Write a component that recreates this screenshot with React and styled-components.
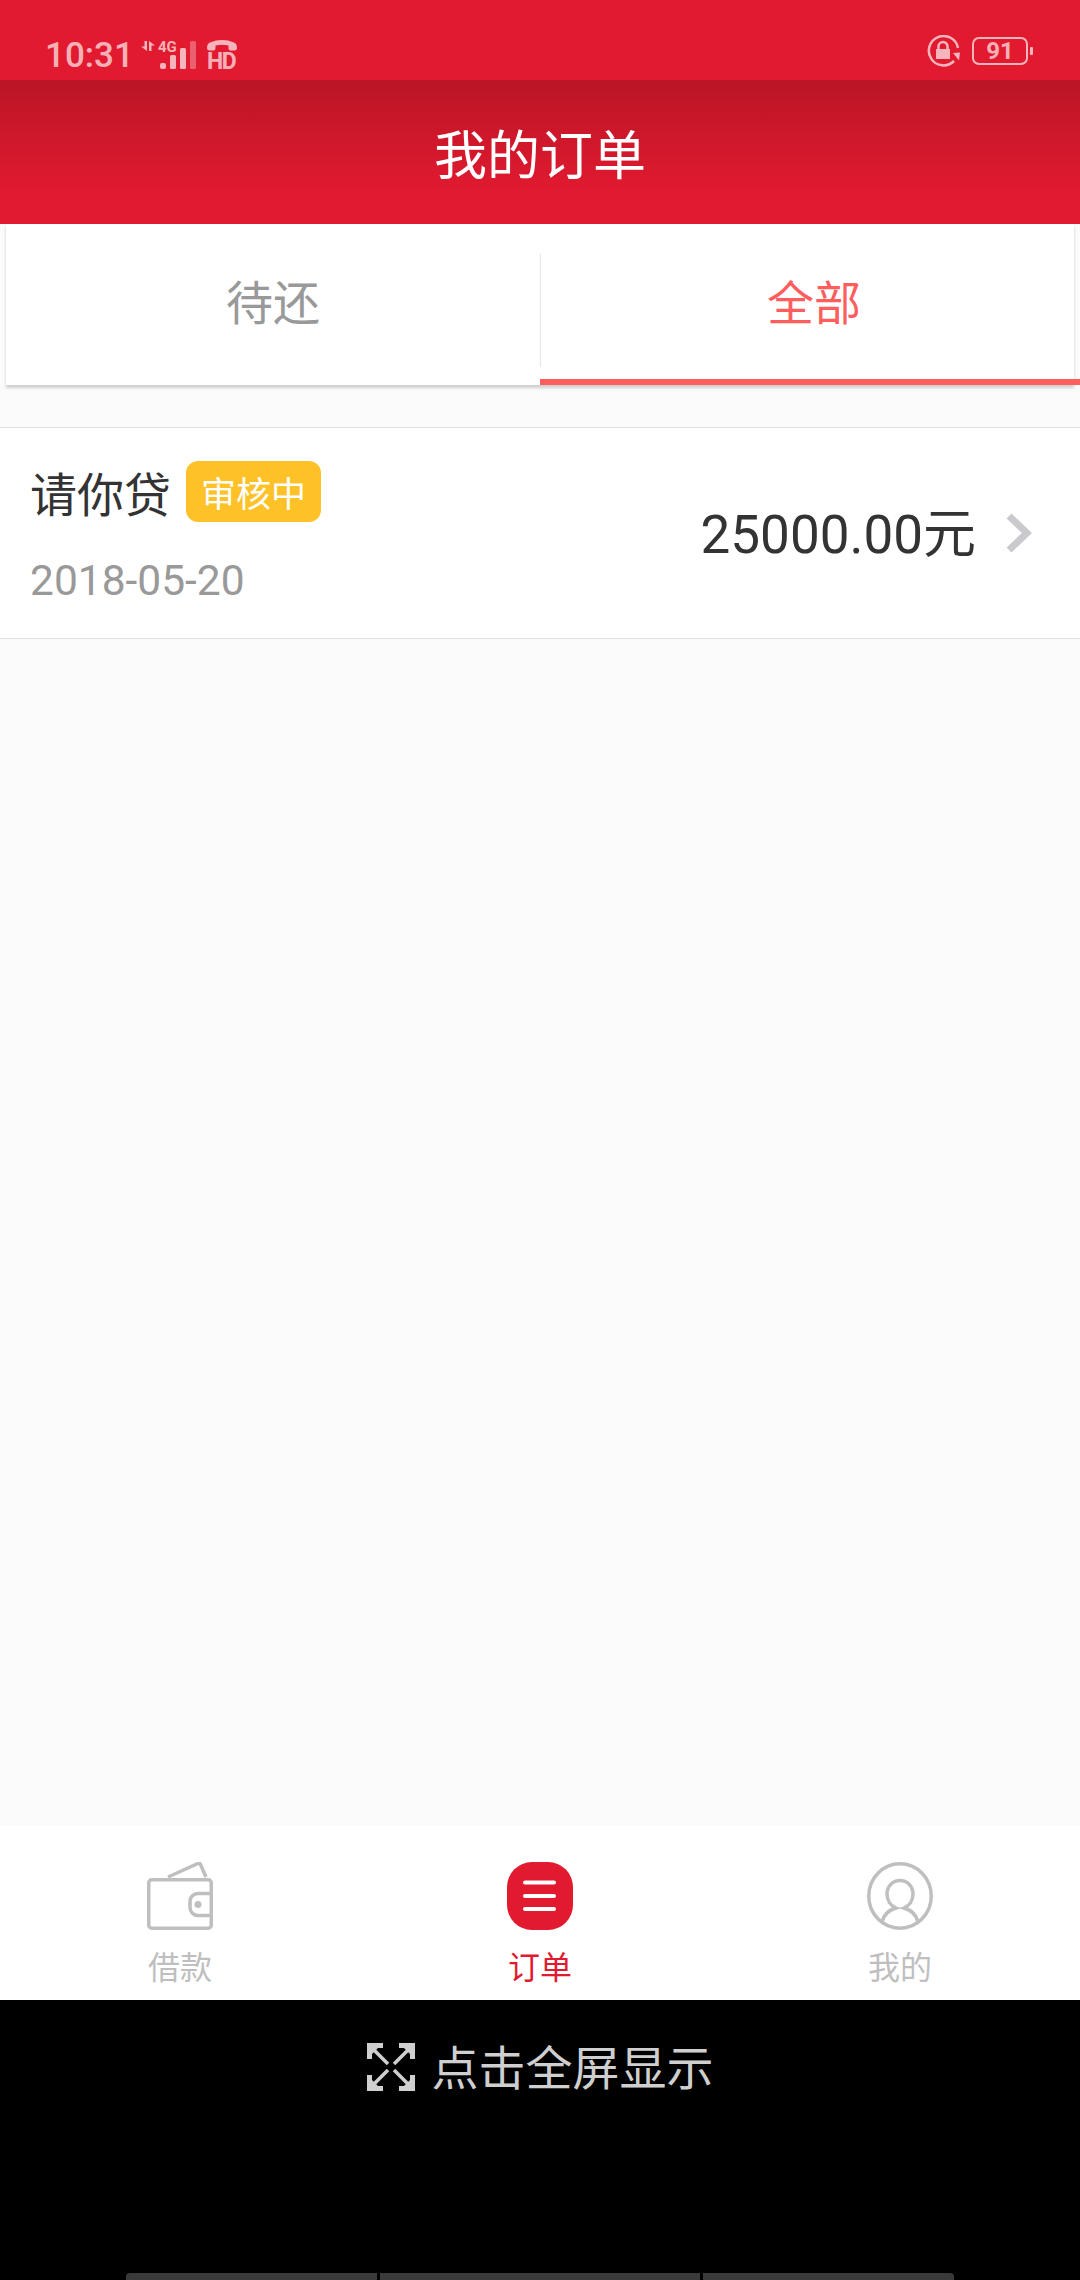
import React from "react";
import styled, { createGlobalStyle } from "styled-components";

const GlobalStyle = createGlobalStyle`
  html, body {
    margin: 0;
    padding: 0;
    background: #000;
  }
  * {
    box-sizing: border-box;
  }
`;

const CJK = `Roboto, "Noto Sans CJK SC", sans-serif`;
const RED = "#e21a30";

const Page = styled.div`
  width: 1080px;
  height: 2280px;
  display: flex;
  flex-direction: column;
  overflow: hidden;
  background: #fbfbfb;
  font-family: ${CJK};
`;

const StatusBar = styled.div`
  height: 80px;
  flex: none;
  display: flex;
  align-items: flex-start;
  justify-content: space-between;
  padding: 36px 52px 0 45px;
  background: ${RED};
  color: rgba(255, 255, 255, 0.68);
`;

const StatusGroup = styled.div`
  display: flex;
  align-items: center;
  margin-top: ${(p) => p.$lift || "0"};
`;

const Clock = styled.span`
  width: 95px;
  font-size: 35px;
  font-weight: 500;
  line-height: 40px;
`;

const SignalWrap = styled.div`
  position: relative;
  width: 57px;
  height: 32px;
`;

const NetLabel = styled.span`
  position: absolute;
  left: 18px;
  top: 0;
  font-size: 15px;
  line-height: 14px;
  font-weight: 700;
`;

const HdWrap = styled.div`
  position: relative;
  width: 30px;
  height: 32px;
  margin-left: 10px;
`;

const HdLabel = styled.span`
  position: absolute;
  left: 0;
  bottom: 0;
  font-size: 23px;
  line-height: 20px;
  font-weight: 700;
  letter-spacing: -1.5px;
`;

const Battery = styled.div`
  width: 56px;
  height: 28px;
  margin-left: 12px;
  position: relative;
  border: 2px solid rgba(255, 255, 255, 0.68);
  border-radius: 7px;
  display: flex;
  align-items: center;
  justify-content: center;
  font-size: 24px;
  font-weight: 700;

  &::after {
    content: "";
    position: absolute;
    right: -7px;
    top: 8px;
    width: 3px;
    height: 8px;
    border-radius: 1px;
    background: rgba(255, 255, 255, 0.68);
  }
`;

const Header = styled.header`
  height: 144px;
  flex: none;
  display: flex;
  align-items: center;
  justify-content: center;
  color: #fff;
  font-size: 53px;
  background: linear-gradient(#bb1525 0, ${RED} 115px);
`;

const Tabs = styled.div`
  height: 161px;
  flex: none;
  margin: 0 6px;
  display: grid;
  grid-template-columns: 1fr 1fr;
  background: #fff;
  box-shadow: 0 3px 3px rgba(0, 0, 0, 0.18);
`;

const Tab = styled.div`
  position: relative;
  display: flex;
  align-items: center;
  justify-content: center;
  padding-bottom: 11px;
  padding-left: ${(p) => (p.$active ? "14px" : "0")};
  font-size: 47px;
  color: ${(p) => (p.$active ? "#ff5e5e" : "#999")};

  &::before {
    content: "";
    display: ${(p) => (p.$active ? "block" : "none")};
    position: absolute;
    left: 0;
    top: 30px;
    width: 1px;
    height: 113px;
    background: #e6e6e6;
  }

  &::after {
    content: "";
    display: ${(p) => (p.$active ? "block" : "none")};
    position: absolute;
    left: 0;
    right: -6px;
    bottom: 0;
    height: 6px;
    background: #ff5e5e;
  }
`;

const Content = styled.main`
  flex: 1;
  padding-top: 42px;
`;

const OrderRow = styled.div`
  height: 212px;
  display: flex;
  align-items: center;
  justify-content: space-between;
  padding: 0 48px 0 30px;
  background: #fff;
  border-top: 1px solid #e2e2e2;
  border-bottom: 1px solid #e2e2e2;
`;

const OrderInfo = styled.div`
  display: flex;
  flex-direction: column;
  gap: 34px;
`;

const TitleLine = styled.div`
  display: flex;
  align-items: center;
  gap: 15px;
  height: 62px;
`;

const OrderName = styled.span`
  font-size: 47px;
  color: #333;
`;

const Badge = styled.span`
  width: 135px;
  height: 61px;
  display: flex;
  align-items: center;
  justify-content: center;
  border-radius: 12px;
  background: #fec228;
  color: #fff;
  font-size: 35px;
`;

const OrderDate = styled.span`
  font-size: 42.5px;
  line-height: 50px;
  color: #999;
`;

const AmountWrap = styled.div`
  display: flex;
  align-items: center;
  gap: 30px;
`;

const Amount = styled.span`
  padding-bottom: 6px;
  font-size: 53px;
  color: #333;
`;

const TabBar = styled.nav`
  height: 174px;
  flex: none;
  display: grid;
  grid-template-columns: repeat(3, 1fr);
  background: #fff;
`;

const TabBarItem = styled.div`
  display: flex;
  flex-direction: column;
  align-items: center;
  padding-top: 36px;
  color: ${(p) => (p.$active ? RED : "#bfbfbf")};
`;

const TabBarLabel = styled.span`
  margin-top: 18px;
  font-size: 32px;
  line-height: 40px;
`;

const BlackArea = styled.div`
  height: 280px;
  flex: none;
  display: flex;
  flex-direction: column;
  background: #000;
`;

const FullscreenHint = styled.div`
  display: flex;
  align-items: center;
  justify-content: center;
  gap: 17px;
  margin-top: 43px;
  height: 48px;
  color: #cfcfcf;
  font-size: 47px;
`;

const HintText = styled.span`
  margin-top: -5px;
`;

const GestureBars = styled.div`
  margin-top: auto;
  margin-left: 126px;
  display: flex;
  gap: 3px;
  width: 828px;
  height: 7px;
`;

const GestureBar = styled.div`
  flex: ${(p) => p.$grow};
  background: #3a3a3a;
  border-radius: ${(p) => p.$radius || "0"};
`;

const SignalIcon = () => (
  <svg width="57" height="32" viewBox="0 0 57 32" fill="currentColor">
    <path d="M7 1v10L1 6.500h3.500V1zM9 1l6 4.500h-3.500V11H9z" />
    <rect x="20" y="23" width="6" height="6" rx="2" />
    <rect x="30" y="15" width="6" height="14" rx="1.500" />
    <rect x="40" y="8" width="6" height="21" rx="1.500" />
    <rect x="50" y="1" width="6" height="28" rx="1.500" opacity="0.45" />
  </svg>
);

const PhoneIcon = () => (
  <svg width="30" height="12" viewBox="0 0 30 12" style={{ display: "block" }} fill="currentColor">
    <path d="M0 8c0-3 1-4.500 3-5.500C7 .8 11 0 15 0s8 .8 12 2.500c2 1 3 2.500 3 5.500 0 1.500-1 2.500-2.500 2.500h-4C22 10.500 21.500 9.500 21.500 8V5.500C19.500 5 17 4.800 15 4.800s-4.500.2-6.500.7V8c0 1.500-.5 2.500-2 2.500h-4C1 10.500 0 9.500 0 8z" />
  </svg>
);

const RotateLockIcon = () => (
  <svg width="33" height="32" viewBox="0 0 33 32" fill="none" stroke="currentColor" strokeWidth="2.500">
    <path d="M27 26A14.700 14.700 0 1 1 31 13" />
    <path d="M26 18l7-.5-1 8z" fill="currentColor" stroke="none" />
    <rect x="9" y="14" width="14" height="10" fill="currentColor" stroke="none" />
    <path d="M11.500 14v-2.500a4.500 4.500 0 0 1 9 0V14" />
  </svg>
);

const ChevronIcon = () => (
  <svg width="26" height="40" viewBox="0 0 26 40" fill="none" stroke="#c9c9ce" strokeWidth="7">
    <path d="M3 3l18 17L3 37" />
  </svg>
);

const WalletIcon = () => (
  <svg width="66" height="68" viewBox="0 0 66 68" fill="none" stroke="currentColor" strokeWidth="3.500">
    <path d="M21 15L51 1.500c1-.4 2-.2 2.500 1L59 15" />
    <rect x="1.750" y="17.750" width="62.500" height="48.500" rx="3" />
    <path d="M64.500 31.500H51a8 8 0 0 0-8 8v6a8 8 0 0 0 8 8h13.500" />
    <circle cx="51" cy="42.500" r="3.500" fill="currentColor" stroke="none" />
  </svg>
);

const OrdersIcon = () => (
  <svg width="66" height="68" viewBox="0 0 66 68">
    <rect width="66" height="68" rx="25" fill={RED} />
    <g fill="#fff">
      <rect x="16" y="18.500" width="33" height="4" rx="2" />
      <rect x="16" y="32" width="33" height="4" rx="2" />
      <rect x="16" y="45" width="33" height="4" rx="2" />
    </g>
  </svg>
);

const UserIcon = () => (
  <svg width="66" height="68" viewBox="0 0 66 68" fill="none" stroke="currentColor" strokeWidth="3.500">
    <ellipse cx="33" cy="34" rx="31.250" ry="32.250" />
    <path d="M15 60c2-8 7-12 14-14-5-2-9-7-9-14 0-8 6-13.500 13-13.500S46 24 46 32c0 7-4 12-9 14 7 2 12 6 14 14" />
  </svg>
);

const ExpandIcon = () => (
  <svg width="48" height="48" viewBox="0 0 48 48" fill="none" stroke="#cfcfcf">
    <g strokeWidth="5">
      <path d="M2.500 16V2.500H16" />
      <path d="M45.500 16V2.500H32" />
      <path d="M2.500 32v13.500H16" />
      <path d="M45.500 32v13.500H32" />
    </g>
    <g strokeWidth="3.500">
      <path d="M4 4l17 17" />
      <path d="M44 4L27 21" />
      <path d="M4 44l17-17" />
      <path d="M44 44L27 27" />
    </g>
    <g fill="#cfcfcf" stroke="none">
      <path d="M3 3h10L3 13z" />
      <path d="M45 3H35l10 10z" />
      <path d="M3 45h10L3 35z" />
      <path d="M45 45H35l10-10z" />
    </g>
  </svg>
);

export default function App() {
  return (
    <Page>
      <GlobalStyle />
      <StatusBar>
        <StatusGroup>
          <Clock>10:31</Clock>
          <SignalWrap>
            <SignalIcon />
            <NetLabel>4G</NetLabel>
          </SignalWrap>
          <HdWrap>
            <PhoneIcon />
            <HdLabel>HD</HdLabel>
          </HdWrap>
        </StatusGroup>
        <StatusGroup $lift="-1px">
          <RotateLockIcon />
          <Battery>91</Battery>
        </StatusGroup>
      </StatusBar>
      <Header>我的订单</Header>
      <Tabs>
        <Tab>待还</Tab>
        <Tab $active>全部</Tab>
      </Tabs>
      <Content>
        <OrderRow>
          <OrderInfo>
            <TitleLine>
              <OrderName>请你贷</OrderName>
              <Badge>审核中</Badge>
            </TitleLine>
            <OrderDate>2018-05-20</OrderDate>
          </OrderInfo>
          <AmountWrap>
            <Amount>25000.00元</Amount>
            <ChevronIcon />
          </AmountWrap>
        </OrderRow>
      </Content>
      <TabBar>
        <TabBarItem>
          <WalletIcon />
          <TabBarLabel>借款</TabBarLabel>
        </TabBarItem>
        <TabBarItem $active>
          <OrdersIcon />
          <TabBarLabel>订单</TabBarLabel>
        </TabBarItem>
        <TabBarItem>
          <UserIcon />
          <TabBarLabel>我的</TabBarLabel>
        </TabBarItem>
      </TabBar>
      <BlackArea>
        <FullscreenHint>
          <ExpandIcon />
          <HintText>点击全屏显示</HintText>
        </FullscreenHint>
        <GestureBars>
          <GestureBar $grow={251} $radius="4px 0 0 0" />
          <GestureBar $grow={320} />
          <GestureBar $grow={251} $radius="0 4px 0 0" />
        </GestureBars>
      </BlackArea>
    </Page>
  );
}
